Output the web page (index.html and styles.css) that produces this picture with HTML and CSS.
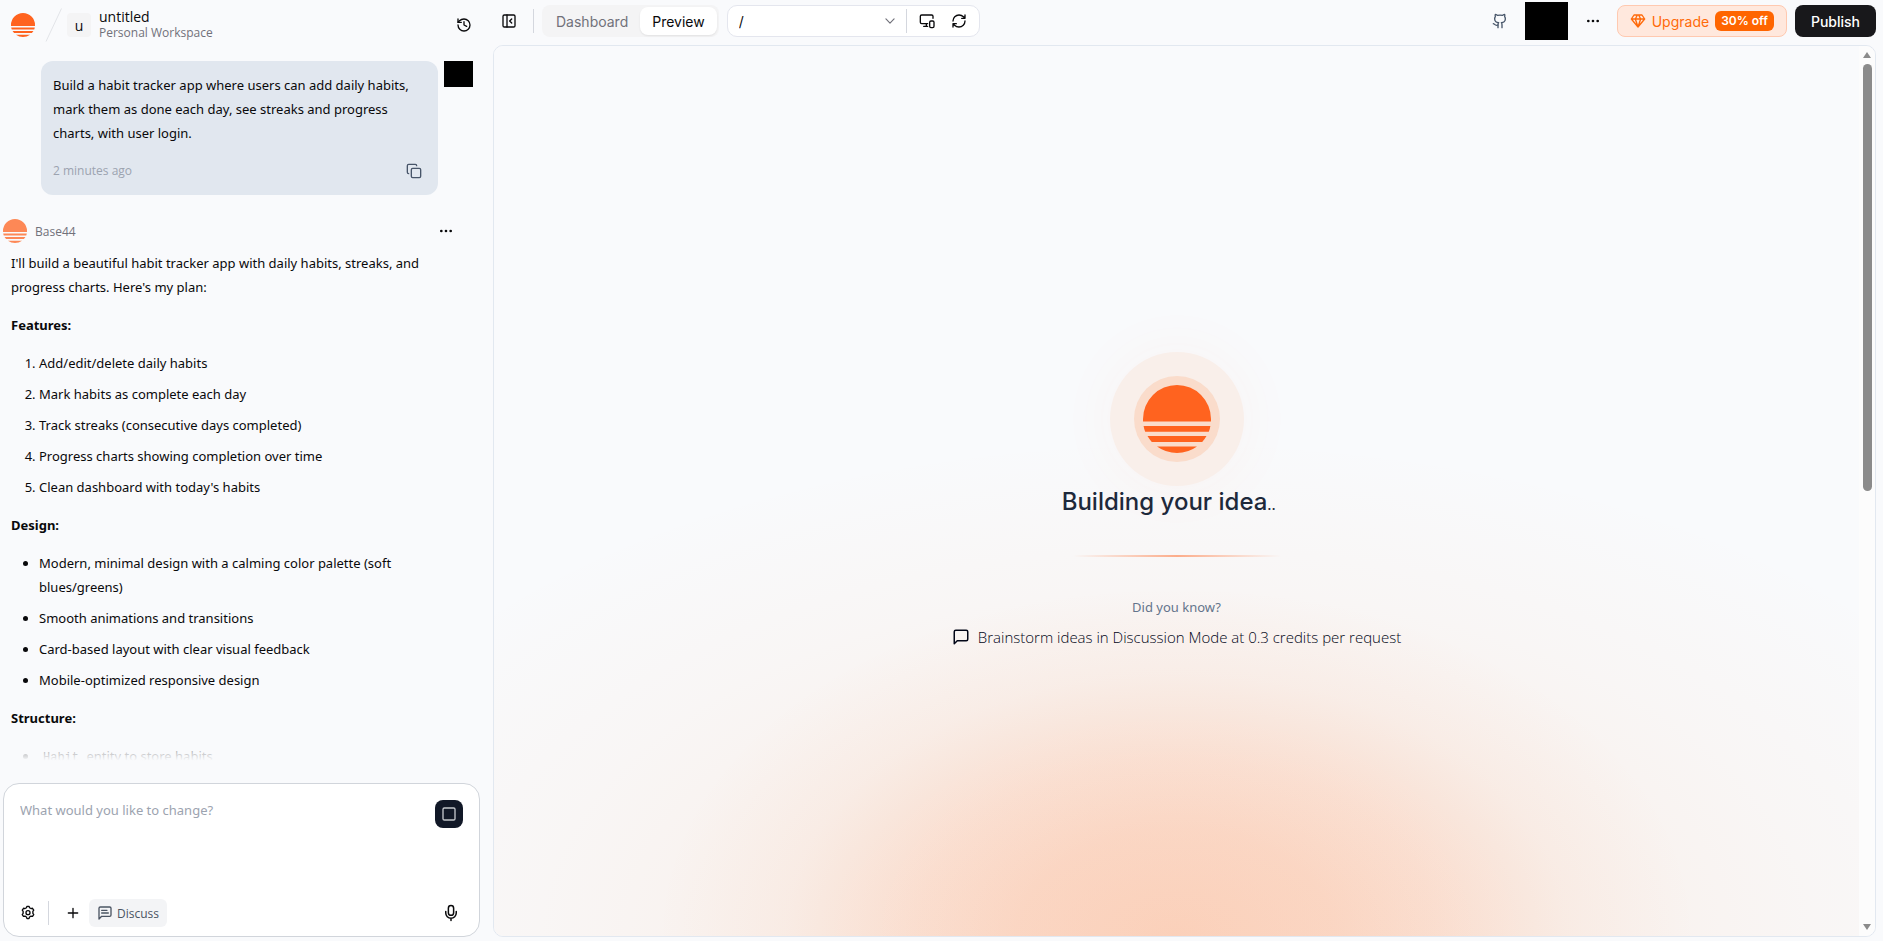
FILE: index.html
```html
<!DOCTYPE html>
<html lang="en">
<head>
    <meta charset="utf-8">
    <title>untitled | Base44</title>
    <link rel="stylesheet" href="styles.css">
</head>
<body>
    <svg class="sprite" aria-hidden="true">
        <symbol id="sun" viewBox="0 0 68 68">
            <path d="M0 36.500V34a34 34 0 0 1 68 0v2.500zM.6 41h66.800q-.5 3.200-1.600 5.800H2.200Q1.100 44.200.6 41zM4.500 51h59q-1.800 3.200-4.300 6H8.800Q6.300 54.200 4.500 51zM14 61.500h40Q45 68 34 68t-20-6.500z"/>
        </symbol>
    </svg>

    <div class="app">
        <aside class="chat">
            <header class="chat-header">
                <a href="#" class="home" aria-label="Home"><svg class="sun" viewBox="0 0 68 68"><use href="#sun"/></svg></a>
                <svg class="slash" viewBox="0 0 18 34"><path d="M1 33.500 16.500.5"/></svg>
                <div class="app-letter">u</div>
                <div class="app-name">
                    <strong>untitled</strong>
                    <span>Personal Workspace</span>
                </div>
                <button class="icon-btn history" aria-label="History">
                    <svg class="icon" viewBox="0 0 24 24"><path d="M3 12a9 9 0 1 0 9-9 9.750 9.750 0 0 0-6.740 2.740L3 8"/><path d="M3 3v5h5M12 7v5l4 2"/></svg>
                </button>
            </header>

            <div class="messages">
                <div class="user-row">
                    <div class="bubble">
                        <p>Build a habit tracker app where users can add daily habits, mark them as done each day, see streaks and progress charts, with user login.</p>
                        <div class="bubble-footer">
                            <span>2 minutes ago</span>
                            <button class="icon-btn copy" aria-label="Copy">
                                <svg class="icon" viewBox="0 0 24 24"><rect x="8" y="8" width="14" height="14" rx="2"/><path d="M4 16c-1.100 0-2-.9-2-2V4c0-1.100.9-2 2-2h10c1.100 0 2 .9 2 2"/></svg>
                            </button>
                        </div>
                    </div>
                    <div class="avatar"></div>
                </div>

                <div class="bot-head">
                    <svg class="sun" viewBox="0 0 68 68"><use href="#sun"/></svg>
                    <span>Base44</span>
                    <button class="icon-btn" aria-label="Message options">
                        <svg class="icon dots" viewBox="0 0 24 24"><circle cx="5" cy="12" r="1"/><circle cx="12" cy="12" r="1"/><circle cx="19" cy="12" r="1"/></svg>
                    </button>
                </div>

                <div class="reply">
                    <p>I'll build a beautiful habit tracker app with daily habits, streaks, and progress charts. Here's my plan:</p>
                    <p><strong>Features:</strong></p>
                    <ol>
                        <li>Add/edit/delete daily habits</li>
                        <li>Mark habits as complete each day</li>
                        <li>Track streaks (consecutive days completed)</li>
                        <li>Progress charts showing completion over time</li>
                        <li>Clean dashboard with today's habits</li>
                    </ol>
                    <p><strong>Design:</strong></p>
                    <ul>
                        <li>Modern, minimal design with a calming color palette (soft blues/greens)</li>
                        <li>Smooth animations and transitions</li>
                        <li>Card-based layout with clear visual feedback</li>
                        <li>Mobile-optimized responsive design</li>
                    </ul>
                    <p><strong>Structure:</strong></p>
                    <ul>
                        <li><code>Habit</code> entity to store habits</li>
                    </ul>
                </div>
                <div class="fade"></div>
            </div>

            <form class="composer">
                <div class="composer-top">
                    <textarea aria-label="Message" placeholder="What would you like to change?"></textarea>
                    <button type="button" class="stop" aria-label="Stop">
                        <svg class="icon" viewBox="0 0 24 24"><rect x="3" y="3" width="18" height="18" rx="2"/></svg>
                    </button>
                </div>
                <div class="composer-bar">
                    <button type="button" class="icon-btn" aria-label="Settings">
                        <svg class="icon" viewBox="0 0 24 24"><path d="M9.700 4.100 10.500 2h3l.8 2.100 2.100 1.200 2.300-.4 1.900 2.700-1.300 1.900v2.900l1.300 2-1.800 2.700-2.400-.3-2.100 1.200-.8 2.500h-3l-.8-2.500-2.100-1.200-2.400.3-1.800-2.700 1.300-2V9.500L3.400 7.600l1.900-2.700 2.300.4z"/><circle cx="12" cy="11.500" r="3"/></svg>
                    </button>
                    <span class="divider"></span>
                    <button type="button" class="icon-btn add" aria-label="Add">
                        <svg class="icon" viewBox="0 0 24 24"><path d="M5 12h14M12 5v14"/></svg>
                    </button>
                    <button type="button" class="discuss">
                        <svg class="icon" viewBox="0 0 24 24"><path d="M21 15a2 2 0 0 1-2 2H7l-4 4V5a2 2 0 0 1 2-2h14a2 2 0 0 1 2 2zM7 8h8M7 12h10"/></svg>
                        Discuss
                    </button>
                    <button type="button" class="icon-btn mic" aria-label="Voice input">
                        <svg class="icon" viewBox="0 0 24 24"><rect x="8.500" y="2" width="7" height="13" rx="3.500"/><path d="M19 10v2a7 7 0 0 1-14 0v-2M12 19v3"/></svg>
                    </button>
                </div>
            </form>
        </aside>

        <main class="workspace">
            <nav class="toolbar">
                <button class="icon-btn" aria-label="Collapse chat">
                    <svg class="icon" viewBox="0 0 24 24"><rect x="3" y="3" width="18" height="18" rx="2"/><path d="M9 3v18M16 15l-3-3 3-3"/></svg>
                </button>
                <span class="divider"></span>
                <div class="tabs">
                    <button>Dashboard</button>
                    <button class="active">Preview</button>
                </div>
                <div class="address">
                    <select aria-label="Page"><option>/</option></select>
                    <svg class="icon chevron" viewBox="0 0 24 24"><path d="m5 8.500 7 7 7-7"/></svg>
                    <span class="divider"></span>
                    <button class="icon-btn" aria-label="Device size">
                        <svg class="icon" viewBox="0 0 24 24"><path d="M21 8V5a2 2 0 0 0-2-2H4a2 2 0 0 0-2 2v9a2 2 0 0 0 2 2h9M11 16v4M7 20h6"/><rect x="16" y="12" width="6.500" height="10" rx="2"/></svg>
                    </button>
                    <button class="icon-btn refresh" aria-label="Refresh">
                        <svg class="icon" viewBox="0 0 24 24"><path d="M3 12a9 9 0 0 1 9-9 9.750 9.750 0 0 1 6.740 2.740L21 8M21 3v5h-5M21 12a9 9 0 0 1-9 9 9.750 9.750 0 0 1-6.740-2.740L3 16M8 16H3v5"/></svg>
                    </button>
                </div>

                <div class="actions">
                    <button class="icon-btn github" aria-label="GitHub">
                        <svg class="icon" viewBox="0 0 24 24"><path d="M15 22v-4a4.800 4.800 0 0 0-1-3.500c3 0 6-2 6-5.500.08-1.250-.27-2.480-1-3.500.28-1.150.28-2.350 0-3.500 0 0-1 0-3 1.500-2.640-.5-5.360-.5-8 0C6 2 5 2 5 2c-.3 1.150-.3 2.350 0 3.500A5.400 5.400 0 0 0 4 9c0 3.500 3 5.500 6 5.500-.39.490-.68 1.050-.85 1.650S8.930 17.380 9 18v4"/><path d="M9 18c-4.510 2-5-2-7-2"/></svg>
                    </button>
                    <div class="account"></div>
                    <button class="icon-btn" aria-label="More">
                        <svg class="icon dots" viewBox="0 0 24 24"><circle cx="5" cy="12" r="1"/><circle cx="12" cy="12" r="1"/><circle cx="19" cy="12" r="1"/></svg>
                    </button>
                    <button class="upgrade">
                        <svg class="icon" viewBox="0 0 24 24"><path d="M6 3h12l4 6-10 12L2 9zM2 9h20M12 21 8 9l3-6M12 21l4-12-3-6"/></svg>
                        Upgrade
                        <span class="badge">30% off</span>
                    </button>
                    <button class="publish">Publish</button>
                </div>
            </nav>

            <section class="preview">
                <div class="canvas">
                    <div class="loader">
                        <div class="halo">
                            <div class="halo-inner"><svg class="sun" viewBox="0 0 68 68"><use href="#sun"/></svg></div>
                        </div>
                        <h1>Building your idea<span>..</span></h1>
                        <div class="progress"></div>
                        <p class="hint">Did you know?</p>
                        <p class="tip">
                            <svg class="icon" viewBox="0 0 24 24"><path d="M21 15a2 2 0 0 1-2 2H7l-4 4V5a2 2 0 0 1 2-2h14a2 2 0 0 1 2 2z"/></svg>
                            Brainstorm ideas in Discussion Mode at 0.3 credits per request
                        </p>
                    </div>
                </div>
                <div class="scrollbar">
                    <svg class="arrow" viewBox="0 0 8 6"><path d="M4 0 8 6H0z"/></svg>
                    <div class="track"><div class="thumb"></div></div>
                    <svg class="arrow" viewBox="0 0 8 6"><path d="M0 0h8L4 6z"/></svg>
                </div>
            </section>
        </main>
    </div>
</body>
</html>
```

FILE: styles.css
```css
* {
    box-sizing: border-box;
}
body {
    margin: 0;
    background: #f9fafc;
    color: #09090b;
    font-family: "Open Sans", "Noto Sans", sans-serif;
    font-size: 13px;
}
button, select, textarea {
    margin: 0;
    padding: 0;
    border: 0;
    background: none;
    color: inherit;
    font: inherit;
}
p, h1, ol, ul {
    margin: 0;
}
.sprite {
    display: none;
}
.sun {
    display: block;
    width: 24px;
    height: 24px;
    fill: #ff631f;
}
.icon {
    display: block;
    flex: none;
    width: 16px;
    height: 16px;
    fill: none;
    stroke: currentColor;
    stroke-width: 2;
    stroke-linecap: round;
    stroke-linejoin: round;
}
.icon.dots {
    fill: currentColor;
}
.icon-btn {
    display: flex;
    flex: none;
    align-items: center;
    justify-content: center;
    width: 24px;
    height: 24px;
}
.divider {
    flex: none;
    width: 1px;
    height: 24px;
    background: #d4d7de;
}

.app {
    display: grid;
    grid-template-columns: 493px 1fr;
    height: 100vh;
    padding: 0 7px 4px 0;
}

/* chat column */
.chat {
    display: flex;
    flex-direction: column;
    min-height: 0;
    padding-right: 13px;
}
.chat-header {
    display: flex;
    flex: none;
    align-items: center;
    height: 50px;
    padding: 0 4px 0 11px;
}
.slash {
    width: 18px;
    height: 34px;
    margin-left: 10px;
    fill: none;
    stroke: #e2e4e8;
}
.app-letter {
    display: flex;
    align-items: center;
    justify-content: center;
    width: 24px;
    height: 24px;
    margin: 0 8px 0 4px;
    border-radius: 4px;
    background: #f4f4f5;
    font-size: 14px;
}
.app-name {
    display: flex;
    flex-direction: column;
    color: #71717a;
    font-size: 12px;
    line-height: 16px;
}
.app-name strong {
    color: #09090b;
    font-size: 14px;
    font-weight: 500;
}
.history {
    margin-left: auto;
}
.messages {
    position: relative;
    flex: 1;
    min-height: 0;
    overflow: hidden;
    padding-top: 11px;
}
.user-row {
    display: flex;
    align-items: flex-start;
    gap: 6px;
    padding: 0 7px 0 41px;
}
.bubble {
    flex: 1;
    padding: 12px;
    border-radius: 12px;
    background: #e1e7ef;
    line-height: 24px;
}
.bubble p,
.reply,
.composer textarea,
.hint {
    font-family: "Noto Sans", "Open Sans", sans-serif;
}
.bubble-footer {
    display: flex;
    align-items: center;
    justify-content: space-between;
    margin-top: 14px;
    color: #9ca3af;
    font-size: 12px;
}
.copy {
    color: #475569;
}
.avatar {
    width: 29px;
    height: 26px;
    background: #000;
}
.bot-head {
    display: flex;
    align-items: center;
    gap: 8px;
    margin: 24px 22px 8px 3px;
    color: #71717a;
    font-size: 12px;
}
.bot-head .sun {
    opacity: .75;
}
.bot-head .icon-btn {
    margin-left: auto;
    color: #09090b;
}
.reply {
    padding: 0 40px 0 11px;
    line-height: 24px;
}
.reply p {
    margin-bottom: 14px;
}
.reply ol,
.reply ul {
    margin-bottom: 14px;
    padding-left: 28px;
}
.reply li + li {
    margin-top: 7px;
}
.reply code {
    padding: 0 4px;
    font-family: "Liberation Mono", monospace;
    font-size: 12px;
}
.fade {
    position: absolute;
    right: 0;
    bottom: 0;
    left: 0;
    height: 56px;
    background: linear-gradient(rgba(249, 250, 252, 0), #f9fafc 60%);
}
.composer {
    display: flex;
    flex: none;
    flex-direction: column;
    justify-content: space-between;
    height: 154px;
    margin-left: 3px;
    padding: 16px;
    border: 1px solid #d1d5db;
    border-radius: 16px;
    background: #fff;
}
.composer-top {
    display: flex;
    align-items: flex-start;
}
.composer textarea {
    flex: 1;
    height: 72px;
    outline: 0;
    resize: none;
    line-height: 20px;
}
.composer textarea::placeholder {
    color: #9ca3af;
}
.stop {
    display: flex;
    align-items: center;
    justify-content: center;
    width: 28px;
    height: 28px;
    border-radius: 8px;
    background: #111827;
    color: #c4c7cc;
}
.mic .icon,
.tip .icon {
    width: 18px;
    height: 18px;
}
.composer-bar {
    display: flex;
    align-items: center;
    height: 28px;
    margin-bottom: -7px;
}
.composer-bar .icon-btn:first-child {
    margin-left: -4px;
}
.composer-bar .divider {
    margin: 0 12px 0 8px;
}
.discuss {
    display: flex;
    align-items: center;
    gap: 4px;
    height: 28px;
    margin-left: 4px;
    padding: 0 8px;
    border-radius: 6px;
    background: #f3f4f6;
    color: #4b5563;
    font-size: 12px;
}
.mic {
    margin-left: auto;
}

/* workspace column */
.workspace {
    display: flex;
    flex-direction: column;
    min-width: 0;
    font-family: Inter, sans-serif;
}
.toolbar {
    display: flex;
    flex: none;
    align-items: center;
    height: 45px;
    padding: 0 0 3px 4px;
    font-size: 14px;
}
.toolbar > .divider {
    margin: 0 8px 0 12px;
}
.tabs {
    display: flex;
    padding: 2px;
    border-radius: 8px;
    background: #f4f4f5;
    color: #71717a;
}
.tabs button {
    height: 28px;
    padding: 0 12px;
    border-radius: 8px;
}
.tabs .active {
    background: #fff;
    color: #09090b;
    box-shadow: 0 1px 2px rgba(0, 0, 0, .08);
}
.address {
    display: flex;
    align-items: center;
    width: 253px;
    height: 32px;
    margin-left: 8px;
    padding: 0 8px 0 11px;
    border: 1px solid #e4e6ee;
    border-radius: 10px;
    background: #fff;
}
.address select {
    flex: 1;
    appearance: none;
}
.address .chevron {
    width: 14px;
    height: 14px;
    margin-right: 9px;
    color: #71717a;
}
.address .icon-btn {
    margin-left: 8px;
}
.actions {
    display: flex;
    align-items: center;
    margin-left: auto;
}
.github {
    color: #475569;
}
.account {
    width: 43px;
    height: 38px;
    margin: 0 13px;
    background: #000;
}
.upgrade {
    display: flex;
    align-items: center;
    gap: 6px;
    height: 32px;
    margin: 0 8px 0 12px;
    padding: 0 12px;
    border: 1px solid #ffc9b0;
    border-radius: 8px;
    background: #ffe8dd;
    color: #ff6a0a;
}
.badge {
    padding: 0 6px;
    border-radius: 6px;
    background: #ff6500;
    color: #fff;
    font-size: 12px;
    font-weight: 600;
    line-height: 20px;
}
.publish {
    height: 32px;
    padding: 0 16px;
    border-radius: 8px;
    background: #18181b;
    color: #fff;
    font-weight: 500;
}
.preview {
    display: flex;
    flex: 1;
    min-height: 0;
    overflow: hidden;
    border: 1px solid #e2e8f0;
    border-radius: 10px;
}
.canvas {
    display: flex;
    flex: 1;
    align-items: center;
    justify-content: center;
    padding-top: 18px;
    background:
        radial-gradient(ellipse 520px 350px at 50% 100%, rgba(255, 105, 30, .19), rgba(255, 105, 30, .17) 30%, rgba(255, 105, 30, .12) 50%, rgba(255, 105, 30, .04) 75%, rgba(255, 105, 30, 0)),
        radial-gradient(ellipse 920px 500px at 50% 100%, rgba(255, 125, 40, .14), rgba(255, 125, 40, .03) 70%, rgba(255, 125, 40, 0)),
        #f9fafc;
}
.loader {
    display: flex;
    flex-direction: column;
    align-items: center;
}
.halo,
.halo-inner {
    display: flex;
    align-items: center;
    justify-content: center;
    border-radius: 50%;
}
.halo {
    width: 134px;
    height: 134px;
    background: #f9efea;
    box-shadow: 0 0 60px rgba(255, 120, 50, .05);
}
.halo-inner {
    width: 86px;
    height: 86px;
    background: #fadccb;
}
.halo .sun {
    width: 68px;
    height: 68px;
}
.loader h1 {
    color: #1e293b;
    font-size: 24px;
    font-weight: 500;
    line-height: 32px;
}
.loader h1 span {
    display: inline-block;
    width: 24px;
    font-size: 14px;
}
.progress {
    width: 208px;
    height: 2px;
    margin: 34px 0 38px;
    background: linear-gradient(90deg, rgba(255, 99, 31, 0), rgba(255, 99, 31, .5), rgba(255, 99, 31, 0));
}
.hint {
    color: #64748b;
    line-height: 24px;
}
.tip {
    display: flex;
    align-items: center;
    gap: 8px;
    margin-top: 6px;
    color: #020617;
    font-family: "Open Sans", sans-serif;
    font-size: 15px;
    font-weight: 300;
    line-height: 24px;
}
.scrollbar {
    display: flex;
    flex-direction: column;
    align-items: center;
    gap: 6px;
    width: 16px;
    padding: 6px 0;
    background: #fcfcfc;
}
.arrow {
    width: 8px;
    height: 6px;
    fill: #8b8b8b;
}
.track {
    flex: 1;
}
.thumb {
    width: 9px;
    height: 50%;
    border-radius: 5px;
    background: #8b8b8b;
}
```
